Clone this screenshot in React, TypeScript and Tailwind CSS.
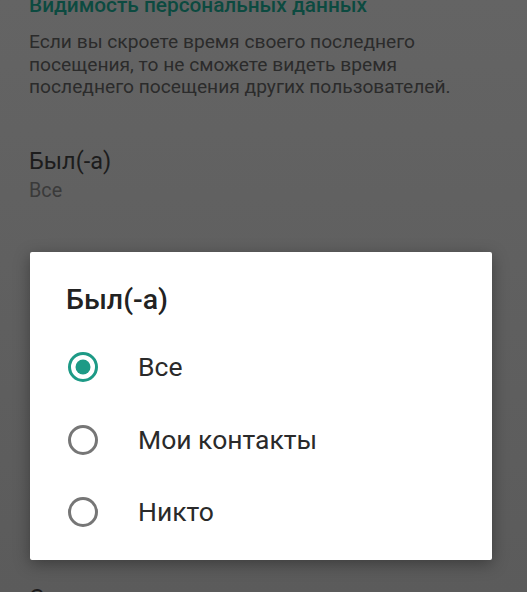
import React from "react";

function Radio({ checked }: { checked: boolean }) {
  return (
    <svg width="32" height="32" viewBox="0 0 32 32" className="shrink-0">
      <circle
        cx="16"
        cy="16"
        r="13.5"
        fill="none"
        stroke={checked ? "#1d9a86" : "#767676"}
        strokeWidth="3"
      />
      {checked && <circle cx="16" cy="16" r="7.5" fill="#1d9a86" />}
    </svg>
  );
}

export default function App() {
  const options = [
    { label: "Все", checked: true },
    { label: "Мои контакты", checked: false },
    { label: "Никто", checked: false },
  ];
  return (
    <div
      className="relative w-[527px] h-[592px] overflow-hidden bg-gradient-to-b from-[#646464] to-[#5b5b5b]"
      style={{ fontFamily: "Roboto, 'Noto Sans', sans-serif" }}
    >
      <div className="pl-[29px] pr-2">
        <div className="-mt-[8px] text-[20.8px] leading-[26px] font-medium text-[#0c4a40] whitespace-nowrap">
          Видимость персональных данных
        </div>
        <p className="mt-[13px] text-[19.2px] leading-[22.5px] text-[#2b2b2b] whitespace-nowrap">
          Если вы скроете время своего последнего
          <br />
          посещения, то не сможете видеть время
          <br />
          последнего посещения других пользователей.
        </p>
        <div className="mt-[48px] text-[23.5px] leading-[28px] text-[#1c1c1c]">Был(-а)</div>
        <div className="mt-[4px] text-[19.8px] leading-[24px] text-[#3a3a3a]">Все</div>
        <div className="mt-[381px] text-[23.5px] leading-[28px] text-[#1c1c1c]">Сведения</div>
      </div>

      <div className="absolute left-[30px] top-[252px] w-[462px] h-[308px] bg-white rounded-[2px] shadow-[0_4px_16px_rgba(0,0,0,0.35)]">
        <div className="pl-[36px] pt-[30px] text-[28.5px] leading-[36px] font-medium text-[#222222]">
          Был(-а)
        </div>
        <div className="mt-[13px] flex flex-col">
          {options.map((o) => (
            <div key={o.label} className="flex items-center h-[72.5px] pl-[37px]">
              <Radio checked={o.checked} />
              <span className="ml-[39px] text-[26.5px] text-[#2a2a2a]">{o.label}</span>
            </div>
          ))}
        </div>
      </div>
    </div>
  );
}
